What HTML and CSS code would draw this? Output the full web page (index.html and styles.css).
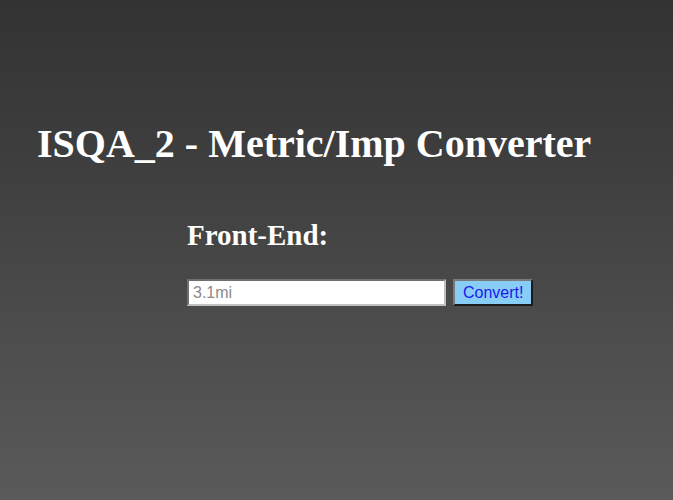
FILE: index.html
```html
<!DOCTYPE html>
<html>
<head>
<meta charset="utf-8">
<link rel="stylesheet" href="styles.css">
</head>
<body>
<header class="hdr">
  <h1 class="title">ISQA_2 - Metric/Imp Converter</h1>
</header>
<section class="front">
  <h2 class="sub">Front-End:</h2>
  <form class="form">
    <input class="inp" type="text" placeholder="3.1mi">
    <button class="btn" type="button">Convert!</button>
  </form>
</section>
</body>
</html>
```
FILE: styles.css
```css
html, body {
  margin: 0;
  height: 100%;
}
body {
  background: linear-gradient(180deg, #333333 0%, #3f3f3f 35%, #4c4c4c 65%, #5a5a5a 100%);
  font-family: "Liberation Serif", "Times New Roman", serif;
  color: #fff;
}
.hdr {
  padding: 120px 0 0 37px;
}
.title {
  margin: 0;
  font-size: 40px;
  font-weight: bold;
  line-height: 48px;
}
.front {
  padding: 0 0 0 187px;
  margin-top: 51px;
}
.sub {
  margin: 0;
  font-size: 29px;
  line-height: 32px;
}
.form {
  display: flex;
  align-items: center;
  gap: 7px;
  margin-top: 28px;
}
.inp {
  box-sizing: border-box;
  width: 259px;
  height: 27px;
  border: 2px solid;
  border-color: #6f6f6f #c0c0c0 #c0c0c0 #6f6f6f;
  padding: 1px 4px;
  font-family: "Liberation Sans", Arial, sans-serif;
  font-size: 16px;
  background: #fff;
}
.inp::placeholder {
  color: #8a8a8a;
}
.btn {
  box-sizing: border-box;
  height: 27px;
  padding: 0 8px;
  background: #87cdf5;
  color: #1a1aee;
  font-family: "Liberation Sans", Arial, sans-serif;
  font-size: 16px;
  border: 2px solid;
  border-color: #7a7a7a #1b1b1b #1b1b1b #7a7a7a;
}
```
